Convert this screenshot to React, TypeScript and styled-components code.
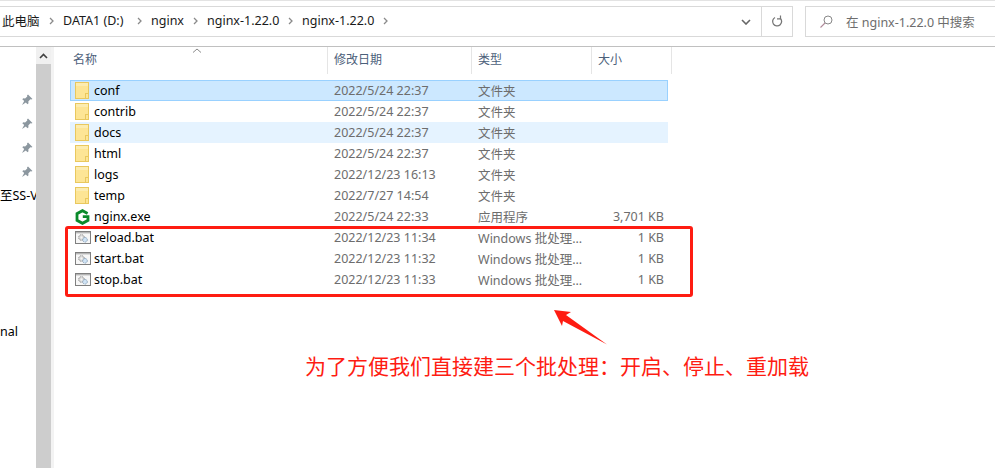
import styled, { createGlobalStyle } from "styled-components";

const GlobalStyle = createGlobalStyle`
    html, body {
        margin: 0;
        padding: 0;
        background: #fff;
    }
    body {
        font-family: "Noto Sans", "Noto Sans CJK SC", "Liberation Sans", sans-serif;
        font-size: 12px;
        color: #000;
    }
`;

const Page = styled.div`
    position: relative;
    width: 995px;
    height: 468px;
    overflow: hidden;
    display: flex;
    flex-direction: column;
`;

const Toolbar = styled.div`
    height: 46px;
    flex: none;
    box-sizing: border-box;
    border-top: 1px solid #e3e3e3;
    padding-top: 5px;
    display: flex;
    align-items: flex-start;
`;

const AddressBox = styled.div`
    width: 793px;
    height: 31px;
    box-sizing: border-box;
    border: 1px solid #d9d9d9;
    border-left: 0;
    display: flex;
    align-items: center;
`;

const Crumbs = styled.div`
    flex: 1;
    display: flex;
    align-items: center;
    padding: 0 0 2px 2px;
    font-size: 12.5px;
    color: #1a1a1a;
`;

const Crumb = styled.span<{ $w: number }>`
    width: ${(p) => p.$w}px;
    flex: none;
    white-space: nowrap;
    display: flex;
    align-items: center;
    justify-content: space-between;
    padding-right: 9px;
    box-sizing: border-box;
`;

const Chevron = styled.svg`
    width: 5px;
    height: 8px;
    flex: none;
`;

const DropZone = styled.div`
    width: 31px;
    height: 100%;
    flex: none;
    display: flex;
    align-items: center;
    justify-content: center;
    border-right: 1px solid #d9d9d9;
`;

const RefreshZone = styled.div`
    width: 30px;
    height: 100%;
    flex: none;
    display: flex;
    align-items: center;
    justify-content: center;
`;

const SearchBox = styled.div`
    margin-left: 12px;
    flex: 1;
    height: 31px;
    box-sizing: border-box;
    border: 1px solid #d9d9d9;
    border-right: 0;
    display: flex;
    align-items: center;
    padding: 0 0 1px 14px;
    gap: 13px;
    font-size: 12.5px;
    color: #6d6d6d;
`;

const Main = styled.div`
    flex: 1;
    display: flex;
    min-height: 0;
    border-top: 1px solid #c0c0c0;
`;

const Sidebar = styled.div`
    width: 36px;
    flex: none;
    overflow: hidden;
    padding-top: 41px;
    box-sizing: border-box;
    display: flex;
    flex-direction: column;
    font-size: 12.5px;
    white-space: nowrap;
`;

const PinRow = styled.div`
    height: 24px;
    flex: none;
    display: flex;
    align-items: center;
    justify-content: flex-end;
    padding-right: 3px;
`;

const SideLabel = styled.div<{ $top: number }>`
    margin-top: ${(p) => p.$top}px;
    line-height: 18px;
`;

const Scrollbar = styled.div`
    width: 15px;
    flex: none;
    background: #cdcdcd;
    display: flex;
    flex-direction: column;
`;

const ScrollArrow = styled.div`
    height: 17px;
    background: #f0f0f0;
    display: flex;
    align-items: center;
    justify-content: center;
`;

const Divider = styled.div`
    width: 3px;
    flex: none;
    background: #f3f3f3;
`;

const FileArea = styled.div`
    flex: 1;
    padding-left: 16px;
`;

const HeaderRow = styled.div`
    position: relative;
    height: 27px;
    display: grid;
    grid-template-columns: 258px 144px 120px 80px;
    margin-bottom: 6px;
`;

const HeaderCell = styled.div`
    box-sizing: border-box;
    height: 27px;
    padding: 0 0 4px 3px;
    display: flex;
    align-items: center;
    font-size: 12px;
    color: #4c607a;
    border-right: 1px solid #e5e5e5;

    &:not(:first-child) {
        padding-left: 6px;
    }
`;

const SortCaret = styled.svg`
    position: absolute;
    left: 122px;
    top: 1px;
    width: 10px;
    height: 5px;
`;

const FileRow = styled.div<{ $state?: "selected" | "hover" }>`
    box-sizing: border-box;
    width: 598px;
    height: 21px;
    display: grid;
    grid-template-columns: 23px 240px 144px 100px 86px;
    align-items: center;
    font-size: 12.5px;
    background: ${(p) =>
        p.$state === "selected" ? "#cce8ff" : p.$state === "hover" ? "#e5f3ff" : "transparent"};
    border: 1px solid ${(p) => (p.$state === "selected" ? "#99d1ff" : "transparent")};
`;

const IconCell = styled.div`
    display: flex;
    align-items: center;
    padding-left: 4px;
`;

const NameCell = styled.div`
    color: #000;
    white-space: nowrap;
`;

const MutedCell = styled.div`
    color: #6d6d6d;
    white-space: nowrap;
`;

const SizeCell = styled(MutedCell)`
    text-align: right;
`;

const RedFrame = styled.div`
    position: absolute;
    left: 65px;
    top: 226px;
    width: 628px;
    height: 71px;
    box-sizing: border-box;
    border: 3px solid #fe1c12;
    border-radius: 3px;
`;

const Arrow = styled.svg`
    position: absolute;
    left: 550px;
    top: 305px;
    width: 60px;
    height: 45px;
`;

const Note = styled.div`
    position: absolute;
    left: 305px;
    top: 350px;
    font-size: 21px;
    line-height: 30px;
    color: #fe1c12;
    white-space: nowrap;
    font-family: "Noto Sans CJK SC", sans-serif;
`;

function Sep() {
    return (
        <Chevron viewBox="0 0 5 8">
            <path d="M1 1l3 3-3 3" fill="none" stroke="#8a8a8a" strokeWidth="1.3" />
        </Chevron>
    );
}

function Pin() {
    return (
        <svg width="12" height="12" viewBox="0 0 12 12">
            <path d="M7 0.5l4.5 4.5-1.3.6-.9-.3-2 2.2.2 1.8-1 1-1.7-1.9L1 11l2.2-4-1.9-1.7 1-1 1.8.2 2.2-2-.3-.9z" fill="#8c979f" />
        </svg>
    );
}

function FolderIcon() {
    return (
        <svg width="14" height="17" viewBox="0 0 14 17">
            <rect x="0.5" y="0.5" width="13" height="16" fill="#fde595" stroke="#e9c85e" />
            <rect x="1" y="1" width="12" height="3" fill="#fcecb0" />
            <rect x="10.5" y="11.5" width="3" height="5" fill="#fde595" stroke="#e9c85e" />
        </svg>
    );
}

function NginxIcon() {
    return (
        <svg width="15" height="16" viewBox="0 0 15 16">
            <path d="M12.600 4.400L7.500 1.700 2 4.700v6.600l5.500 3 5.500-3V7.600H7.800" fill="none" stroke="#0a8a2a" strokeWidth="2.800" />
        </svg>
    );
}

function BatIcon() {
    return (
        <svg width="16" height="13" viewBox="0 0 16 13">
            <rect x="0.5" y="0.5" width="15" height="12" fill="#f7f7f7" stroke="#7f7f7f" />
            <rect x="1" y="1" width="14" height="1.400" fill="#b5b5b5" />
            <circle cx="6.500" cy="6.500" r="2.800" fill="#dcdcdc" stroke="#8f8f8f" strokeDasharray="1.500 0.700" />
            <circle cx="6.500" cy="6.500" r="1" fill="#f7f7f7" />
            <circle cx="10" cy="8.800" r="2.300" fill="#cfe3f5" stroke="#8ca4ba" strokeDasharray="1.400 0.600" />
        </svg>
    );
}

type FileItem = {
    name: string;
    date: string;
    type: string;
    size?: string;
    icon: "folder" | "exe" | "bat";
    state?: "selected" | "hover";
};

const files: FileItem[] = [
    { name: "conf", date: "2022/5/24 22:37", type: "文件夹", icon: "folder", state: "selected" },
    { name: "contrib", date: "2022/5/24 22:37", type: "文件夹", icon: "folder" },
    { name: "docs", date: "2022/5/24 22:37", type: "文件夹", icon: "folder", state: "hover" },
    { name: "html", date: "2022/5/24 22:37", type: "文件夹", icon: "folder" },
    { name: "logs", date: "2022/12/23 16:13", type: "文件夹", icon: "folder" },
    { name: "temp", date: "2022/7/27 14:54", type: "文件夹", icon: "folder" },
    { name: "nginx.exe", date: "2022/5/24 22:33", type: "应用程序", size: "3,701 KB", icon: "exe" },
    { name: "reload.bat", date: "2022/12/23 11:34", type: "Windows 批处理...", size: "1 KB", icon: "bat" },
    { name: "start.bat", date: "2022/12/23 11:32", type: "Windows 批处理...", size: "1 KB", icon: "bat" },
    { name: "stop.bat", date: "2022/12/23 11:33", type: "Windows 批处理...", size: "1 KB", icon: "bat" },
];

export default function App() {
    return (
        <Page>
            <GlobalStyle />
            <Toolbar>
                <AddressBox>
                    <Crumbs>
                        <Crumb $w={61}>此电脑<Sep /></Crumb>
                        <Crumb $w={88}>DATA1 (D:)<Sep /></Crumb>
                        <Crumb $w={56}>nginx<Sep /></Crumb>
                        <Crumb $w={95}>nginx-1.22.0<Sep /></Crumb>
                        <Crumb $w={95}>nginx-1.22.0<Sep /></Crumb>
                    </Crumbs>
                    <DropZone>
                        <svg width="10" height="6" viewBox="0 0 10 6">
                            <path d="M1 1l4 4 4-4" fill="none" stroke="#666" strokeWidth="1.6" />
                        </svg>
                    </DropZone>
                    <RefreshZone>
                        <svg width="12" height="13" viewBox="0 0 12 13">
                            <path d="M4 2.500a4.500 4.500 0 1 0 5 .5" fill="none" stroke="#777" strokeWidth="1.300" />
                            <path d="M9.500 0.500v3.400H6" fill="none" stroke="#777" strokeWidth="1.200" />
                        </svg>
                    </RefreshZone>
                </AddressBox>
                <SearchBox>
                    <svg width="13" height="13" viewBox="0 0 13 13">
                        <circle cx="8" cy="5" r="4" fill="none" stroke="#888" />
                        <path d="M5 8l-4.500 4.500" stroke="#b08a9a" strokeWidth="1.100" />
                    </svg>
                    在 nginx-1.22.0 中搜索
                </SearchBox>
            </Toolbar>
            <Main>
                <Sidebar>
                    <PinRow><Pin /></PinRow>
                    <PinRow><Pin /></PinRow>
                    <PinRow><Pin /></PinRow>
                    <PinRow><Pin /></PinRow>
                    <SideLabel $top={3}>至SS-V</SideLabel>
                    <SideLabel $top={118}>nal</SideLabel>
                </Sidebar>
                <Scrollbar>
                    <ScrollArrow>
                        <svg width="9" height="6" viewBox="0 0 9 6">
                            <path d="M1 5l3.500-3.500L8 5" fill="none" stroke="#404040" strokeWidth="1.600" />
                        </svg>
                    </ScrollArrow>
                </Scrollbar>
                <Divider />
                <FileArea>
                    <HeaderRow>
                        <HeaderCell>名称</HeaderCell>
                        <HeaderCell>修改日期</HeaderCell>
                        <HeaderCell>类型</HeaderCell>
                        <HeaderCell>大小</HeaderCell>
                        <SortCaret viewBox="0 0 10 5">
                            <path d="M1 4.500L5 1l4 3.500" fill="none" stroke="#8a8a8a" />
                        </SortCaret>
                    </HeaderRow>
                    {files.map((f) => (
                        <FileRow key={f.name} $state={f.state}>
                            <IconCell>
                                {f.icon === "folder" && <FolderIcon />}
                                {f.icon === "exe" && <NginxIcon />}
                                {f.icon === "bat" && <BatIcon />}
                            </IconCell>
                            <NameCell>{f.name}</NameCell>
                            <MutedCell>{f.date}</MutedCell>
                            <MutedCell>{f.type}</MutedCell>
                            <SizeCell>{f.size}</SizeCell>
                        </FileRow>
                    ))}
                </FileArea>
            </Main>
            <RedFrame />
            <Arrow viewBox="0 0 60 45">
                <polygon points="4,5 21,7 16,10 57,39.500 13,16 12,21" fill="#fe1c12" />
            </Arrow>
            <Note>{"为了方便我们直接建三个批处理\uFF1A开启、停止、重加载"}</Note>
        </Page>
    );
}
